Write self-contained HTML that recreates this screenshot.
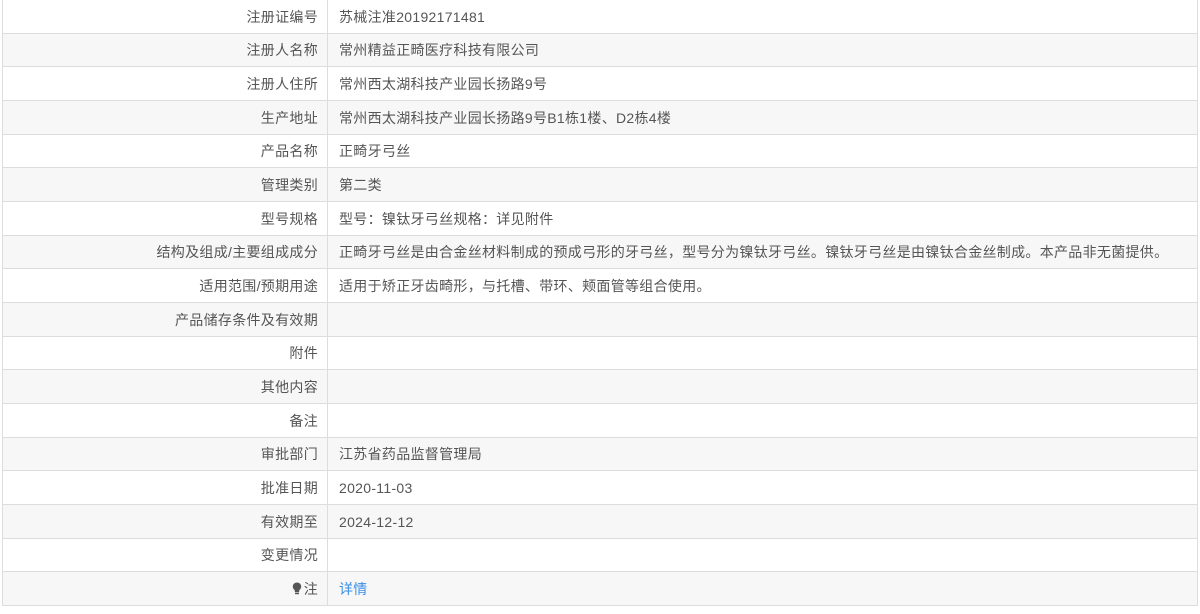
<!DOCTYPE html>
<html><head><meta charset="utf-8"><style>
body{margin:0;background:#fff;font-family:"Liberation Sans","Noto Sans CJK SC",sans-serif;font-size:14px;color:#555;}
.wrap{position:relative;width:1200px;height:614px;overflow:hidden}
.r{position:absolute;left:2px;width:1196px;border-bottom:1px solid #ddd;border-left:1px solid #ddd;border-right:1px solid #ddd;box-sizing:border-box;display:flex;align-items:center;letter-spacing:0.3px}
.r.g{background:#f7f7f7}
.l{width:325px;text-align:right;padding-right:9px;box-sizing:border-box;border-right:1px solid #ddd;height:100%;display:flex;align-items:center;justify-content:flex-end}
.v{padding-left:11px}
a{color:#3a8ee6;text-decoration:none}
</style></head><body><div class="wrap" id="w"></div>
<script>
var ic='<svg width="10" height="13" viewBox="0 0 10 13" style="margin-right:2px"><path d="M5 0.5C2.4 0.5 0.8 2.4 0.8 4.6c0 1.8 1.2 2.8 2 3.8v1.6h4.4V8.4c0.8-1 2-2 2-3.8C9.2 2.4 7.6 0.5 5 0.5z" fill="#555"/><rect x="3" y="10.6" width="4" height="1.6" fill="#555"/></svg>';
var d=[["注册证编号","苏械注准20192171481"],["注册人名称","常州精益正畸医疗科技有限公司"],["注册人住所","常州西太湖科技产业园长扬路9号"],["生产地址","常州西太湖科技产业园长扬路9号B1栋1楼、D2栋4楼"],["产品名称","正畸牙弓丝"],["管理类别","第二类"],["型号规格","型号：镍钛牙弓丝规格：详见附件"],["结构及组成/主要组成成分","正畸牙弓丝是由合金丝材料制成的预成弓形的牙弓丝，型号分为镍钛牙弓丝。镍钛牙弓丝是由镍钛合金丝制成。本产品非无菌提供。"],["适用范围/预期用途","适用于矫正牙齿畸形，与托槽、带环、颊面管等组合使用。"],["产品储存条件及有效期",""],["附件",""],["其他内容",""],["备注",""],["审批部门","江苏省药品监督管理局"],["批准日期","2020-11-03"],["有效期至","2024-12-12"],["变更情况",""],[ic+"注","<a>详情</a>"]];
var h=33.67,s="";
for(var i=0;i<d.length;i++){var t=Math.round(i*h),b=Math.round((i+1)*h);
s+='<div class="r'+(i%2?' g':'')+'" style="top:'+t+'px;height:'+(b-t)+'px"><div class="l">'+d[i][0]+'</div><div class="v">'+d[i][1]+'</div></div>';}
document.getElementById('w').innerHTML=s;
</script></body></html>
